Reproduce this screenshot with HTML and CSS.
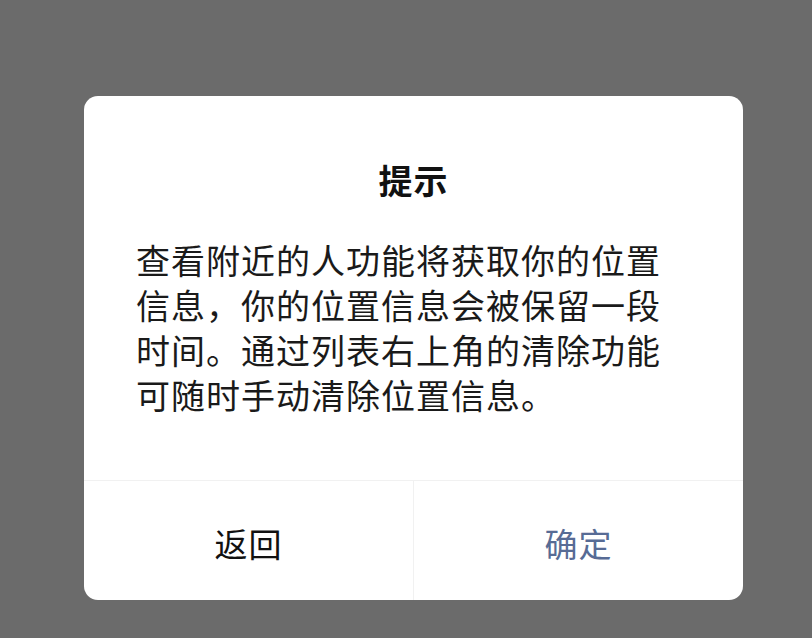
FILE: index.html
```html
<!DOCTYPE html>
<html lang="zh-CN">
<head>
<meta charset="utf-8">
<link rel="stylesheet" href="styles.css">
</head>
<body>
<div class="dialog">
  <div class="content">
    <div class="title">提示</div>
    <div class="message">查看附近的人功能将获取你的位置信息，你的位置信息会被保留一段时间。通过列表右上角的清除功能可随时手动清除位置信息。</div>
  </div>
  <div class="actions">
    <div class="btn cancel">返回</div>
    <div class="btn ok">确定</div>
  </div>
</div>
</body>
</html>
```
FILE: styles.css
```css
html, body {
  margin: 0;
  padding: 0;
}
body {
  width: 812px;
  height: 638px;
  background: #6b6b6b;
  font-family: "Noto Sans CJK SC", "Noto Sans", sans-serif;
  overflow: hidden;
}
.dialog {
  margin: 96px 0 0 84px;
  width: 659px;
  height: 504px;
  background: #ffffff;
  border-radius: 14px;
  display: flex;
  flex-direction: column;
  overflow: hidden;
}
.content {
  padding: 61px 52px 0 52px;
  height: 384px;
  box-sizing: border-box;
}
.title {
  font-size: 34px;
  line-height: 45px;
  font-weight: 700;
  color: #111111;
  text-align: center;
  letter-spacing: 1px;
}
.message {
  margin-top: 35px;
  width: 545px;
  font-size: 34px;
  line-height: 45px;
  letter-spacing: 1px;
  color: #1a1a1a;
}
.actions {
  flex: 1;
  display: flex;
  border-top: 1px solid #f1f1f1;
}
.btn {
  flex: 1;
  display: flex;
  align-items: center;
  justify-content: center;
  font-size: 33px;
  padding-top: 4px;
  letter-spacing: 1px;
}
.cancel {
  color: #111111;
  border-right: 1px solid #f1f1f1;
}
.ok {
  color: #576b95;
}
```
